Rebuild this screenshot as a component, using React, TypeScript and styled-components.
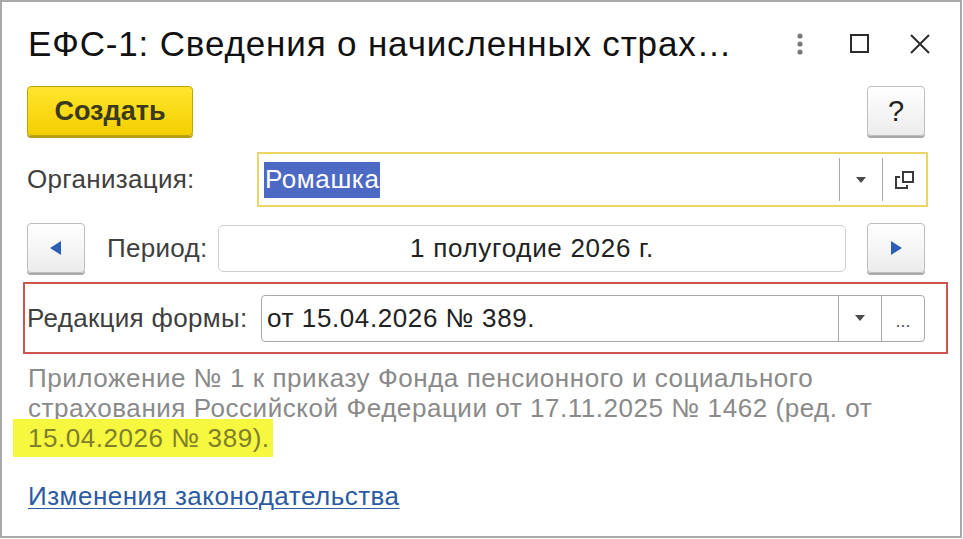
import styled, { createGlobalStyle } from "styled-components";

const GlobalStyle = createGlobalStyle`
  html, body {
    margin: 0;
    padding: 0;
    background: #ffffff;
    font-family: "Liberation Sans", Arial, sans-serif;
  }
`;

const Window = styled.div`
  box-sizing: border-box;
  width: 962px;
  height: 538px;
  border: 2px solid #a9a9a9;
  background: #fff;
  padding: 0 35px 0 25px;
  display: flex;
  flex-direction: column;
`;

const TitleBar = styled.div`
  display: flex;
  align-items: center;
  height: 40px;
  margin-top: 22px;
`;

const Title = styled.h1`
  flex: 1;
  margin: 0 0 0 1px;
  font-weight: normal;
  font-size: 35px;
  letter-spacing: 0.85px;
  line-height: 40px;
  color: #111;
  white-space: nowrap;
`;

const WinButtons = styled.div`
  display: flex;
  align-items: center;
  gap: 34px;
  margin-right: -8px;
`;

const WinIcon = styled.span`
  display: flex;
  width: 26px;
  height: 26px;
  align-items: center;
  justify-content: center;
`;

const Toolbar = styled.div`
  display: flex;
  justify-content: space-between;
  margin-top: 22px;
  height: 50px;
`;

const YellowButton = styled.button`
  box-sizing: border-box;
  width: 166px;
  height: 50px;
  border: 1px solid #c2a400;
  border-radius: 4px;
  background: linear-gradient(#ffe62e, #f3cf00);
  box-shadow: 0 2px 0 #b79c1a;
  font-family: inherit;
  font-weight: bold;
  font-size: 27px;
  color: #3b3a1e;
  padding: 0;
`;

const GrayButton = styled.button`
  box-sizing: border-box;
  width: 58px;
  height: 50px;
  border: 1px solid #bdbdbd;
  border-radius: 4px;
  background: linear-gradient(#ffffff, #ececec);
  box-shadow: 0 2px 0 #a8a8a8;
  font-family: inherit;
  font-size: 29px;
  color: #222;
  display: flex;
  align-items: center;
  justify-content: center;
  padding: 0;
`;

const Row = styled.div<{ $top: number; $height: number; $overhang?: number }>`
  display: flex;
  align-items: center;
  margin-top: ${(p) => p.$top}px;
  margin-right: ${(p) => -(p.$overhang ?? 0)}px;
  height: ${(p) => p.$height}px;
`;

const Label = styled.span<{ $width: number }>`
  width: ${(p) => p.$width}px;
  flex-shrink: 0;
  font-size: 26px;
  letter-spacing: 0.3px;
  color: #3f3f3f;
  white-space: nowrap;
`;

const Field = styled.div<{ $focus?: boolean; $height: number }>`
  box-sizing: border-box;
  flex: 1;
  height: ${(p) => p.$height}px;
  display: flex;
  align-items: stretch;
  border: ${(p) => (p.$focus ? "2px solid #ecd466" : "1px solid #a9a9a9")};
  border-radius: ${(p) => (p.$focus ? "0" : "4px")};
  background: #fff;
`;

const FieldText = styled.div`
  flex: 1;
  display: flex;
  align-items: center;
  padding-left: 5px;
  font-size: 26px;
  letter-spacing: 0.6px;
  color: #222;
  white-space: nowrap;
`;

const Selected = styled.span`
  background: #4c6ac4;
  color: #fff;
  padding: 2px 1px 3px 1px;
`;

const FieldButton = styled.div<{ $width: number; $inset: number }>`
  width: ${(p) => p.$width}px;
  border-left: 1px solid #a9a9a9;
  margin: ${(p) => p.$inset}px 0;
  display: flex;
  align-items: center;
  justify-content: center;
`;

const BoxButton = styled.div`
  width: 42px;
  border-left: 1px solid #a9a9a9;
  display: flex;
  align-items: center;
  justify-content: center;
  color: #555;
  font-size: 18px;
  padding-top: 6px;
`;

const PeriodField = styled.div`
  box-sizing: border-box;
  width: 628px;
  height: 47px;
  margin: 0 21px 0 auto;
  border: 1px solid #cfcfcf;
  border-radius: 5px;
  display: flex;
  align-items: center;
  justify-content: center;
  font-size: 26px;
  letter-spacing: 0.7px;
  color: #222;
`;

const PeriodLabel = styled.span`
  margin-left: 22px;
  font-size: 26px;
  letter-spacing: 0.3px;
  color: #3f3f3f;
`;

const RedBox = styled.div`
  box-sizing: border-box;
  margin: 9px -23px 0 -4px;
  height: 72px;
  border: 2px solid #cc5550;
  display: flex;
  align-items: center;
  padding: 0 21px 0 2px;
`;

const Note = styled.p`
  margin: 9px 0 0 1px;
  width: 880px;
  font-size: 26px;
  letter-spacing: 0.55px;
  line-height: 30px;
  color: #8a8a8a;
`;

const Marker = styled.span`
  background: #f6f73f;
  color: #7f7f2c;
  padding: 4px 3px 4px 15px;
  margin-left: -15px;
`;

const Link = styled.a`
  margin: 28px 0 0 1px;
  font-size: 26px;
  letter-spacing: 0.5px;
  line-height: 30px;
  color: #2b5aa3;
  text-decoration: underline;
  text-decoration-thickness: 1px;
  text-underline-offset: 3px;
  align-self: flex-start;
`;

const DownArrow = () => (
  <svg width="12" height="8" viewBox="0 0 12 8">
    <path d="M1 1h10L6 7z" fill="#4a4a4a" />
  </svg>
);

const OpenIcon = () => (
  <svg width="20" height="18" viewBox="0 0 20 18">
    <rect x="8" y="1" width="10" height="10" fill="none" stroke="#3a3a3a" strokeWidth="2" />
    <path d="M5 6H1v11h11v-3" fill="none" stroke="#3a3a3a" strokeWidth="2" />
  </svg>
);

const Tri = ({ dir }: { dir: "left" | "right" }) => (
  <svg width="12" height="14" viewBox="0 0 12 14">
    <path d={dir === "left" ? "M11 0v14L0 7z" : "M1 0v14l11-7z"} fill="#2c5fb3" />
  </svg>
);

export default function App() {
  return (
    <>
      <GlobalStyle />
      <Window>
        <TitleBar>
          <Title>ЕФС-1: Сведения о начисленных страх…</Title>
          <WinButtons>
            <WinIcon>
              <svg width="8" height="22" viewBox="0 0 8 22">
                <circle cx="4" cy="3" r="2.6" fill="#7b7b7b" />
                <circle cx="4" cy="11" r="2.6" fill="#7b7b7b" />
                <circle cx="4" cy="19" r="2.6" fill="#7b7b7b" />
              </svg>
            </WinIcon>
            <WinIcon>
              <svg width="20" height="20" viewBox="0 0 20 20">
                <rect x="1" y="1" width="17" height="17" fill="none" stroke="#2c2c2c" strokeWidth="2" />
              </svg>
            </WinIcon>
            <WinIcon>
              <svg width="22" height="22" viewBox="0 0 22 22">
                <path d="M2 2l18 18M20 2L2 20" stroke="#2c2c2c" strokeWidth="2" />
              </svg>
            </WinIcon>
          </WinButtons>
        </TitleBar>

        <Toolbar>
          <YellowButton>Создать</YellowButton>
          <GrayButton>?</GrayButton>
        </Toolbar>

        <Row $top={16} $height={55} $overhang={3}>
          <Label $width={230}>Организация:</Label>
          <Field $focus $height={55}>
            <FieldText>
              <Selected>Ромашка</Selected>
            </FieldText>
            <FieldButton $width={42} $inset={4}>
              <DownArrow />
            </FieldButton>
            <FieldButton $width={43} $inset={4}>
              <OpenIcon />
            </FieldButton>
          </Field>
        </Row>

        <Row $top={16} $height={50}>
          <GrayButton>
            <Tri dir="left" />
          </GrayButton>
          <PeriodLabel>Период:</PeriodLabel>
          <PeriodField>1 полугодие 2026 г.</PeriodField>
          <GrayButton>
            <Tri dir="right" />
          </GrayButton>
        </Row>

        <RedBox>
          <Label $width={234}>Редакция формы:</Label>
          <Field $height={47}>
            <FieldText>от 15.04.2026 № 389.</FieldText>
            <FieldButton $width={42} $inset={0}>
              <DownArrow />
            </FieldButton>
            <BoxButton>...</BoxButton>
          </Field>
        </RedBox>

        <Note>
          Приложение № 1 к приказу Фонда пенсионного и социального страхования
          Российской Федерации от 17.11.2025 № 1462 (ред. от{" "}
          <Marker>15.04.2026 № 389).</Marker>
        </Note>

        <Link href="#">Изменения законодательства</Link>
      </Window>
    </>
  );
}
